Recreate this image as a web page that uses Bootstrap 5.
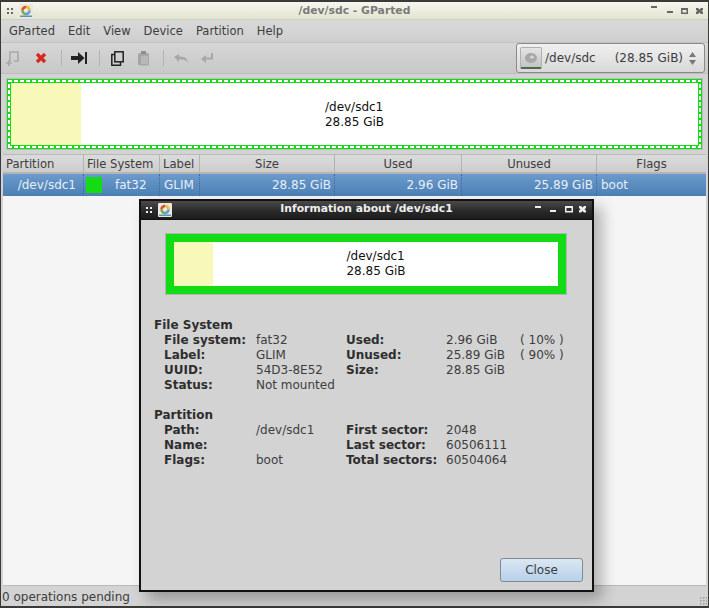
<!DOCTYPE html>
<html lang="en">
<head>
<meta charset="utf-8">
<title>GParted</title>
<link href="https://cdn.jsdelivr.net/npm/bootstrap@5.3.0/dist/css/bootstrap.min.css" rel="stylesheet">
<style>
html,body{height:100%;}
body{margin:0;background:#d3d3d3;font-family:"DejaVu Sans",sans-serif;font-size:12px;line-height:15px;color:#3d3d3d;width:709px;height:608px;overflow:hidden;}
svg{display:block;flex:none;}
.appwin{position:relative;width:709px;height:608px;border:solid #3a3a38;border-width:2px 1px 2px 1px;display:flex;flex-direction:column;}
.wtitle{height:18px;flex:none;background:linear-gradient(#f6f6ee,#e4e4d2);border-bottom:1px solid #cfcfbd;display:flex;align-items:center;padding-left:6px;color:#7a7a7a;font-weight:700;font-size:10.8px;position:relative;}
.ttext{position:absolute;left:0;right:0;text-align:center;}
.grip{width:6px;height:6px;flex:none;background:conic-gradient(#666 25%,transparent 0) -2px 0/4px 4px;margin-right:6px;}
.wctl{margin-left:auto;padding-right:5px;position:relative;}
.menubar{height:23px;flex:none;background:linear-gradient(#d9d9d9,#cfcfcf);border-bottom:1px solid #c2c2c2;display:flex;align-items:center;padding-left:8px;gap:13px;font-size:11.5px;}
.toolbar{height:31px;flex:none;background:linear-gradient(#d6d6d6,#c8c8c8);border-bottom:1px solid #bdbdbd;display:flex;align-items:center;position:relative;}
.tbtn{width:24px;height:24px;display:flex;align-items:center;justify-content:center;flex:none;}
.tbtn+.tbtn{margin-left:2px;}
.tbtn.wide{margin-left:4px;}
.tsep{width:1px;height:16px;background:#b4b4b4;margin:0 5px 0 8px;flex:none;}
.devcombo{position:absolute;left:515px;top:0;width:189px;height:30px;border:1px solid #8a8a8a;border-radius:3px;background:linear-gradient(#f0f0f0,#d8d8d8);display:flex;align-items:center;padding-left:3px;}
.devicon{width:22px;height:22px;border:1px solid #b0b0b0;border-bottom:2px solid #4d6a4d;border-radius:2px;background:linear-gradient(#e4e4e4,#c4c4c4);display:flex;align-items:center;justify-content:center;margin-right:3px;flex:none;}
.devsize{margin-left:19px;}
.partarea{height:79px;flex:none;padding:5px 6px 0 6px;}
.pbar{height:70px;background:#14dc14;padding:1px;box-shadow:0 0 0 1px #bdbdbd;}
.pdash{height:100%;padding:3px;display:flex;position:relative;
  background:
   repeating-linear-gradient(90deg,#fff 0 4px,transparent 4px 6px) 0 0/100% 2px no-repeat,
   repeating-linear-gradient(90deg,#fff 0 4px,transparent 4px 6px) 0 100%/100% 2px no-repeat,
   repeating-linear-gradient(0deg,#fff 0 4px,transparent 4px 6px) 0 0/2px 100% no-repeat,
   repeating-linear-gradient(0deg,#fff 0 4px,transparent 4px 6px) 100% 0/2px 100% no-repeat;}
.pused{width:70px;background:#f8f8b9;flex:none;}
.pfree{flex:1;background:#fff;}
.plabel{position:absolute;inset:0;display:flex;align-items:center;justify-content:center;color:#111;padding:2px 0 0 0;}
.plabel.indlg{padding:0 0 1px 20px;}
.tree{flex:1;margin:1px 2px 0;background:#f5f5f5;display:flex;flex-direction:column;min-height:0;border-bottom:1px solid #b9b9b9;}
.thead{height:20px;flex:none;display:flex;background:linear-gradient(#dcdcdc,#cccccc);border-top:1px solid #b9b9b9;border-bottom:2px solid #b4b4b4;font-size:11.6px;}
.thead div{border-right:1px solid #b3b3b3;padding:0 3px;text-align:center;white-space:nowrap;line-height:19px;}
.thead div.lft{text-align:left;}
.trow{height:22px;flex:none;display:flex;background:linear-gradient(#6c9bcc,#4b7fb5);color:#e8eef5;}
.trow>div{border-right:1px dotted #3f6896;padding:0 3px;white-space:nowrap;line-height:22px;}
.trow>div.cname{padding-right:7px;}
.trow>div.cfs{padding-left:2px;}
.trow>div.clab,.trow>div.c7{padding-left:4px;}
.c1{width:81px;}.c2{width:76px;}.c3{width:40px;}.c4{width:135px;}.c5{width:127px;}.c6{width:135px;}.c7{width:109px;border-right:0!important;}
.swatch{width:16px;height:16px;background:#14dc14;flex:none;margin-right:13px;}
.statusbar{height:20px;flex:none;padding:4px 1px 0;position:relative;}
.rgrip{position:absolute;right:1px;bottom:1px;width:8px;height:8px;background:conic-gradient(#aaa 25%,transparent 0) 0 0/3px 3px;}
.dlg{position:absolute;left:138px;top:197px;width:455px;height:393px;background:#d3d3d3;border:2px solid #111;box-shadow:8px 8px 14px rgba(0,0,0,.28);display:flex;flex-direction:column;}
.dtitle{height:18px;flex:none;background:linear-gradient(#4a4a4a,#2a2a2a 55%,#1c1c1c);color:#eee;font-weight:700;font-size:10.8px;display:flex;align-items:center;padding-left:5px;position:relative;}
.dtitle .ttext{top:0;}
.dtitle .grip{background-image:conic-gradient(#eee 25%,transparent 0);}
.dtitle .wctl{padding-right:6px;}
.dsep{height:1px;flex:none;background:#111;}
.dbody{flex:1;padding:13px 0 0 13px;position:relative;}
.dbar{width:402px;height:62px;margin-left:11px;border:1px solid #b5b5b5;background:#14dc14;padding:8px;}
.dbarin{height:100%;display:flex;background:#fff;position:relative;}
.dused{width:39px;background:#f8f8b9;flex:none;}
.info{margin-top:23px;display:grid;grid-template-columns:10px 92px 90px 100px 74px 60px;grid-auto-rows:15px;white-space:nowrap;}
.info b{color:#2e2e2e;font-weight:700;}
.info .full{grid-column:1 / -1;}
.closebtn{position:absolute;right:9px;bottom:8px;width:83px;height:24px;border:1px solid #7f8a96;border-radius:3px;background:linear-gradient(#dbe7f3,#b7d0ea);color:#3d3d3d;display:flex;align-items:center;justify-content:center;}
</style>
</head>
<body>
<div class="appwin">
  <div class="wtitle">
    <span class="grip"></span>
    <svg width="14" height="14" viewBox="0 0 14 14"><rect width="14" height="14" rx="1" fill="#eee8da"/><g fill="none" stroke-width="2.6"><path d="M3.500 6.500A3.500 3.500 0 0 1 7 3" stroke="#d9533a"/><path d="M7 3a3.500 3.500 0 0 1 3.500 3.500" stroke="#e8b93a"/><path d="M10.500 6.500A3.500 3.500 0 0 1 7 10" stroke="#5aa0d8"/><path d="M7 10a3.500 3.500 0 0 1-3.500-3.500" stroke="#6fb04a"/></g><rect x="1" y="11.500" width="12" height="1.500" fill="#5b8fc4"/></svg>
    <span class="ttext">/dev/sdc - GParted</span>
    <div class="wctl">
      <svg width="52" height="12" viewBox="0 0 52 12"><g fill="#666"><rect x="0" y="1" width="6" height="2"/><rect x="16" y="6" width="6" height="2"/><path d="M30 3h7v6h-7zM31.500 5v2.500h4V5z" fill-rule="evenodd"/><path d="M45 3h2l1.500 1.500L50 3h2v2l-1.500 1L52 7v2h-2l-1.500-1.500L47 9h-2V7l1.500-1L45 5z"/></g></svg>
    </div>
  </div>
  <div class="menubar"><span>GParted</span><span>Edit</span><span>View</span><span>Device</span><span>Partition</span><span>Help</span></div>
  <div class="toolbar">
    <div class="tbtn"><svg width="16" height="16" viewBox="0 0 16 16" fill="none" stroke="#a9a9a9" stroke-width="1.600"><path d="M5 11V2h8v9H9"/><path d="M1 13h6M4 10v6"/></svg></div>
    <div class="tbtn wide"><svg width="12" height="12" viewBox="0 0 12 12"><path d="M2 2l8 8M10 2l-8 8" stroke="#d42a20" stroke-width="3.400"/></svg></div>
    <div class="tsep"></div>
    <div class="tbtn"><svg width="16" height="12" viewBox="0 0 16 12"><path d="M0 4h7V0l6.500 6L7 12V8H0z" fill="#222"/><rect x="14" y="0" width="2" height="12" fill="#222"/></svg></div>
    <div class="tsep"></div>
    <div class="tbtn"><svg width="13" height="15" viewBox="0 0 13 15" fill="none" stroke="#222" stroke-width="1.500"><rect x="3.800" y=".8" width="8.400" height="10"/><path d="M3.500 3.500H.8v10.700h8.700v-3"/></svg></div>
    <div class="tbtn"><svg width="13" height="15" viewBox="0 0 13 15"><rect x="1" y="2" width="11" height="12.500" rx="1.500" fill="#a6a6a6"/><rect x="4" y="0" width="5" height="3" fill="#8e8e8e"/><rect x="4" y="5" width="7" height="8" fill="#b8b8b8"/></svg></div>
    <div class="tsep"></div>
    <div class="tbtn"><svg width="15" height="10" viewBox="0 0 15 10"><path d="M0 4l5-3v2.500c5 0 8 1.500 9.500 6-2.500-2.500-5-3-9.500-3V9z" fill="#a8a8a8"/></svg></div>
    <div class="tbtn"><svg width="14" height="12" viewBox="0 0 14 12"><path d="M1 7l5-4v2.500h5V1h2v6.500H6V11z" fill="#a8a8a8"/></svg></div>
    <div class="devcombo">
      <div class="devicon"><svg width="14" height="12" viewBox="0 0 14 12"><ellipse cx="7" cy="6" rx="6" ry="5" fill="#a8a8a8"/><ellipse cx="8" cy="5" rx="2" ry="1.500" fill="#d8d8d8"/></svg></div>
      <span>/dev/sdc</span><span class="devsize">(28.85 GiB)</span>
      <svg class="ms-auto me-2" width="7" height="15" viewBox="0 0 7 15"><path d="M3.500 1L7 6H0zM3.500 14L0 9h7z" fill="#777"/></svg>
    </div>
  </div>
  <div class="partarea">
    <div class="pbar"><div class="pdash"><div class="pused"></div><div class="pfree"></div><div class="plabel"><div>/dev/sdc1<br>28.85 GiB</div></div></div></div>
  </div>
  <div class="tree">
    <div class="thead"><div class="c1 lft">Partition</div><div class="c2 lft">File System</div><div class="c3 lft">Label</div><div class="c4">Size</div><div class="c5">Used</div><div class="c6">Unused</div><div class="c7">Flags</div></div>
    <div class="trow">
      <div class="c1 cname text-end">/dev/sdc1</div>
      <div class="c2 cfs d-flex align-items-center"><span class="swatch"></span><span>fat32</span></div>
      <div class="c3 clab">GLIM</div>
      <div class="c4 text-end">28.85 GiB</div>
      <div class="c5 text-end">2.96 GiB</div>
      <div class="c6 text-end">25.89 GiB</div>
      <div class="c7">boot</div>
    </div>
  </div>
  <div class="statusbar">0 operations pending<span class="rgrip"></span></div>

  <div class="dlg">
    <div class="dtitle">
      <span class="grip"></span>
      <svg width="14" height="14" viewBox="0 0 14 14"><rect width="14" height="14" rx="1" fill="#eee8da"/><g fill="none" stroke-width="2.6"><path d="M3.500 6.500A3.500 3.500 0 0 1 7 3" stroke="#d9533a"/><path d="M7 3a3.500 3.500 0 0 1 3.500 3.500" stroke="#e8b93a"/><path d="M10.500 6.500A3.500 3.500 0 0 1 7 10" stroke="#5aa0d8"/><path d="M7 10a3.500 3.500 0 0 1-3.500-3.500" stroke="#6fb04a"/></g><rect x="1" y="11.500" width="12" height="1.500" fill="#5b8fc4"/></svg>
      <span class="ttext">Information about /dev/sdc1</span>
      <div class="wctl">
        <svg width="51" height="12" viewBox="0 0 51 12"><g fill="#eee"><rect x="0" y="2" width="6" height="2"/><rect x="15" y="6" width="6" height="2"/><path d="M30 2h8v6.500h-8zM31.500 4v3h5V4z" fill-rule="evenodd"/><path d="M44 2h2l1.500 1.500L49 2h2v2l-1.500 1.300L51 6.500v2h-2L47.500 7 46 8.500h-2v-2l1.500-1.200L44 4z"/></g></svg>
      </div>
    </div>
    <div class="dsep"></div>
    <div class="dbody">
      <div class="dbar"><div class="dbarin"><div class="dused"></div><div class="plabel indlg"><div>/dev/sdc1<br>28.85 GiB</div></div></div></div>
      <div class="info">
        <b class="full">File System</b>
        <span></span><b>File system:</b><span>fat32</span><b>Used:</b><span>2.96 GiB</span><span>( 10% )</span>
        <span></span><b>Label:</b><span>GLIM</span><b>Unused:</b><span>25.89 GiB</span><span>( 90% )</span>
        <span></span><b>UUID:</b><span>54D3-8E52</span><b>Size:</b><span>28.85 GiB</span><span></span>
        <span></span><b>Status:</b><span>Not mounted</span><span></span><span></span><span></span>
        <span class="full"></span>
        <b class="full">Partition</b>
        <span></span><b>Path:</b><span>/dev/sdc1</span><b>First sector:</b><span>2048</span><span></span>
        <span></span><b>Name:</b><span></span><b>Last sector:</b><span>60506111</span><span></span>
        <span></span><b>Flags:</b><span>boot</span><b>Total sectors:</b><span>60504064</span><span></span>
      </div>
      <button type="button" class="closebtn">Close</button>
    </div>
  </div>
</div>
</body>
</html>
